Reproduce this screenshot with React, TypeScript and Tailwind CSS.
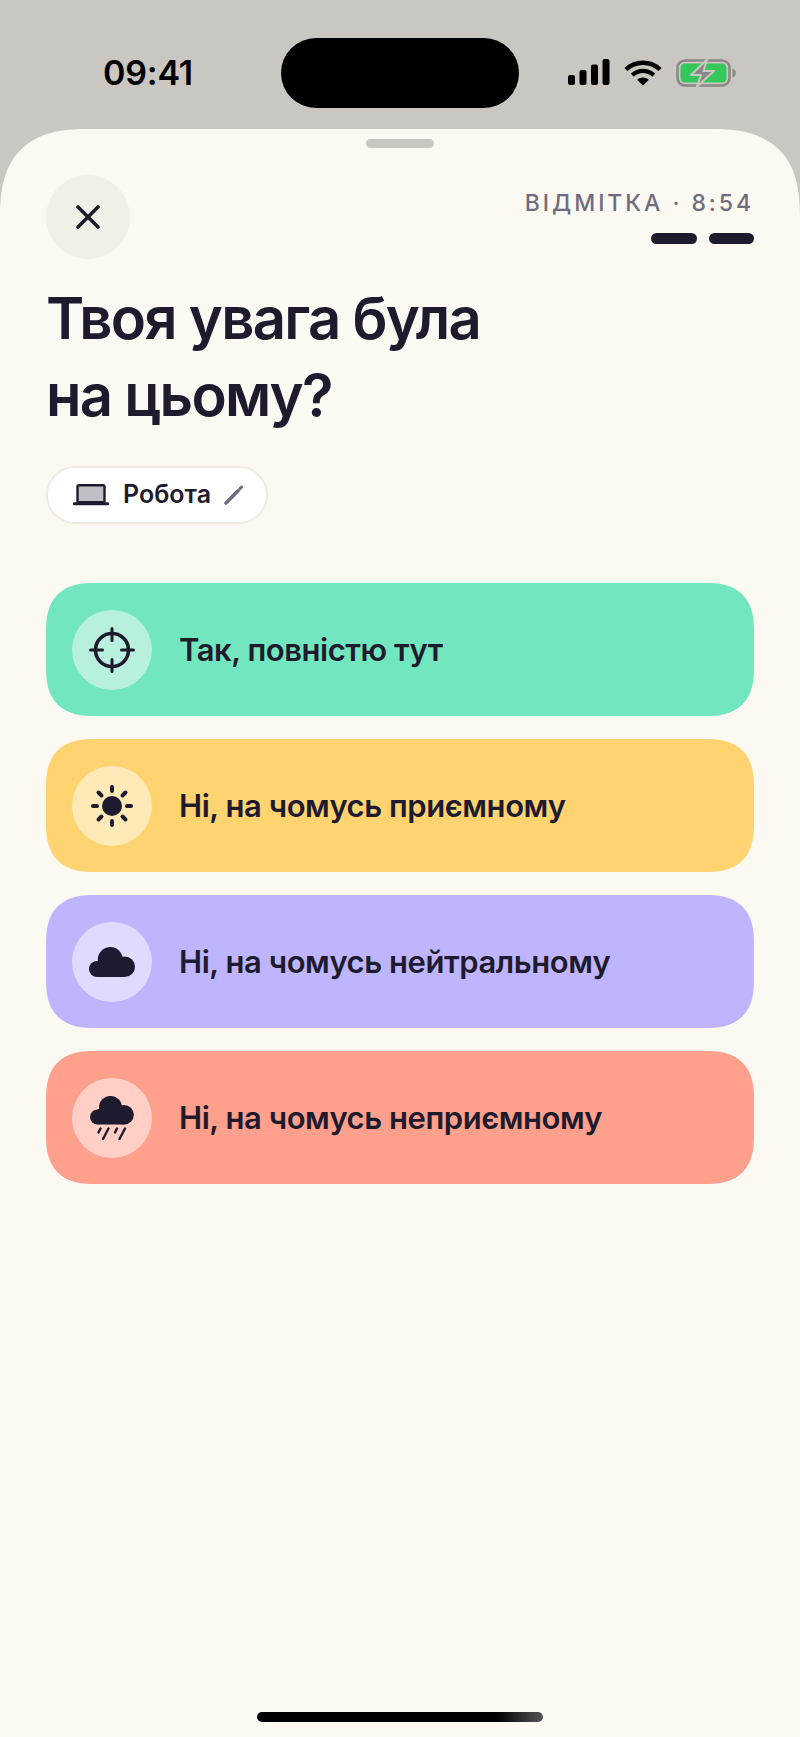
import React from "react";

const ink = "#1E1B2E";

function Signal() {
  return (
    <svg width="42" height="27" viewBox="0 0 42 27" fill="#000">
      <rect x="0" y="16" width="7" height="10" rx="2" />
      <rect x="11.5" y="11" width="7" height="15" rx="2" />
      <rect x="23" y="5.5" width="7" height="20.5" rx="2" />
      <rect x="34.5" y="0" width="7" height="26" rx="2" />
    </svg>
  );
}

function Wifi() {
  return (
    <svg width="38" height="27" viewBox="0 0 38 27" fill="none" stroke="#000" strokeWidth="4.4">
      <path d="M2 10.5C11.5 1.5 26.5 1.5 36 10.5" />
      <path d="M8.2 16.2C14.5 10.4 23.5 10.4 29.8 16.2" />
      <path d="M19 26.5L13.2 20.8C16.6 17.8 21.4 17.8 24.8 20.8Z" fill="#000" stroke="none" />
    </svg>
  );
}

function Battery() {
  return (
    <svg width="60" height="28" viewBox="0 0 60 28">
      <rect x="1.5" y="1.5" width="52" height="25" rx="7.5" fill="none" stroke="#8B8985" strokeWidth="2.6" />
      <rect x="4.5" y="4.5" width="46" height="19" rx="4.5" fill="#34C759" />
      <path d="M56.5 9.5c2.2.6 3.2 2.4 3.2 4.5s-1 3.9-3.2 4.5z" fill="#8B8985" />
      <path d="M31 0.5L15 16h10l-4 11.5L38 12H27.5z" fill="#8B8985" stroke="#CAC7C2" strokeWidth="2" strokeLinejoin="round" />
    </svg>
  );
}

function CloseIcon() {
  return (
    <svg width="24" height="24" viewBox="0 0 24 24" fill="none" stroke={ink} strokeWidth="3.6" strokeLinecap="round">
      <path d="M2 2L22 22M22 2L2 22" />
    </svg>
  );
}

function Laptop() {
  return (
    <svg width="36" height="22" viewBox="0 0 36 22" fill="none">
      <rect x="4.5" y="1.2" width="27" height="17" rx="1.5" fill="#C1BEC6" stroke={ink} strokeWidth="2.4" />
      <path d="M1.2 19.8H34.8" stroke={ink} strokeWidth="3" strokeLinecap="round" />
    </svg>
  );
}

function Pencil() {
  return (
    <svg width="20" height="20" viewBox="0 0 20 20" fill="none" stroke="#6F6C7B" strokeLinecap="round">
      <path d="M2 18L14 5.8" strokeWidth="3.6" />
      <path d="M16 3.6L17.6 2" strokeWidth="3" />
    </svg>
  );
}

function Target() {
  return (
    <svg width="46" height="46" viewBox="0 0 46 46" fill="none" stroke={ink} strokeLinecap="round">
      <circle cx="23" cy="23" r="16.5" strokeWidth="3.6" />
      <path d="M23 1.5V13.5M23 32.5V44.5M1.5 23H13.5M32.5 23H44.5" strokeWidth="3" />
    </svg>
  );
}

function Sun() {
  return (
    <svg width="44" height="44" viewBox="0 0 44 44" fill={ink} stroke={ink} strokeWidth="4" strokeLinecap="round">
      <circle cx="22" cy="22" r="10" stroke="none" />
      <path d="M22 3V7M22 37V41M3 22H7M37 22H41M8.5 8.5L11.5 11.5M32.5 32.5L35.5 35.5M8.5 35.5L11.5 32.5M32.5 11.5L35.5 8.5" />
    </svg>
  );
}

function Cloud() {
  return (
    <svg width="46" height="30" viewBox="0 0 46 30" fill={ink}>
      <circle cx="8" cy="22" r="8" />
      <circle cx="21.3" cy="12.5" r="12.5" />
      <circle cx="35.7" cy="19.7" r="10.3" />
      <rect x="8" y="14" width="28" height="16" />
    </svg>
  );
}

function Rain() {
  return (
    <svg width="44" height="44" viewBox="0 0 44 44" fill="none">
      <g fill={ink}>
        <circle cx="7.5" cy="21" r="7.5" />
        <circle cx="20.5" cy="11.5" r="11.5" />
        <circle cx="34" cy="18.7" r="9.8" />
        <rect x="7.5" y="13" width="27" height="15.5" />
      </g>
      <path
        d="M10.5 32.5L8.5 36.5M18.5 32.5L13 43M27 32.5L25 36.5M35 32.5L29.5 43"
        stroke={ink}
        strokeWidth="2.4"
        strokeLinecap="round"
      />
    </svg>
  );
}

const options = [
  { label: "Так, повністю тут", bg: "bg-[#72E6BE]", circle: "bg-[#B7F0DD]", icon: <Target /> },
  { label: "Ні, на чомусь приємному", bg: "bg-[#FFD470]", circle: "bg-[#FFE9B6]", icon: <Sun /> },
  { label: "Ні, на чомусь нейтральному", bg: "bg-[#BFB5FF]", circle: "bg-[#DFDAFF]", icon: <Cloud /> },
  { label: "Ні, на чомусь неприємному", bg: "bg-[#FFA08D]", circle: "bg-[#FFCFC5]", icon: <Rain /> },
];

export default function App() {
  return (
    <div className="flex h-[1737px] w-[800px] flex-col overflow-hidden bg-[#CAC7C2] font-['Inter',sans-serif] text-[#1E1B2E]">
      <div className="flex h-[129px] shrink-0 items-start">
        <div className="w-[281px] pl-[103px] pt-[53px] text-[34px] leading-[40px] font-semibold tracking-[-0.2px] text-black">09:41</div>
        <div className="mt-[38px] h-[70px] w-[238px] rounded-full bg-black" />
        <div className="ml-[49px] flex items-start gap-[14px] pt-[59px]">
          <Signal />
          <Wifi />
          <Battery />
        </div>
      </div>

      <div className="flex flex-1 flex-col rounded-t-[90px] bg-[#FCF9F3] px-[46px] [corner-shape:superellipse(1.4)]">
        <div className="mx-auto mt-[10px] h-[9px] w-[68px] rounded-full bg-[#CAC7C2]" />
        <div className="mt-[27px] flex items-start justify-between">
          <div className="flex h-[84px] w-[84px] items-center justify-center rounded-full bg-[#F2EFE7]">
            <CloseIcon />
          </div>
          <div className="flex flex-col items-end">
            <div className="mt-[14px] text-[23px] leading-[28px] font-medium tracking-[2.95px] text-[#706C80]">ВІДМІТКА · 8:54</div>
            <div className="mt-[16px] flex gap-[12px]">
              <div className="h-[11px] w-[46px] rounded-full bg-[#1E1B2E]" />
              <div className="h-[11px] w-[45px] rounded-full bg-[#1E1B2E]" />
            </div>
          </div>
        </div>

        <h1 className="mt-[21px] text-[58px] leading-[77px] font-semibold tracking-[-1.7px]">
          Твоя увага була
          <br />
          на цьому?
        </h1>

        <div className="mt-[32px] flex h-[58px] w-[222px] items-center rounded-full border-2 border-[#F0EBE3] bg-white pl-[25px]">
          <Laptop />
          <span className="ml-[14px] text-[25px] font-semibold">Робота</span>
          <span className="ml-[13px]">
            <Pencil />
          </span>
        </div>

        <div className="mt-[59px] flex flex-col gap-[23px]">
          {options.map((o) => (
            <div key={o.label} className={`flex h-[133px] items-center rounded-[50px] pl-[26px] [corner-shape:superellipse(1.4)] ${o.bg}`}>
              <div className={`flex h-[80px] w-[80px] shrink-0 items-center justify-center rounded-full ${o.circle}`}>{o.icon}</div>
              <span className="ml-[27px] text-[31px] leading-[40px] font-semibold tracking-[-0.45px]">{o.label}</span>
            </div>
          ))}
        </div>

        <div className="mx-auto mt-auto mb-[15px] h-[10px] w-[286px] rounded-full bg-[linear-gradient(90deg,#000_0%,#000_84%,#555_100%)]" />
      </div>
    </div>
  );
}
